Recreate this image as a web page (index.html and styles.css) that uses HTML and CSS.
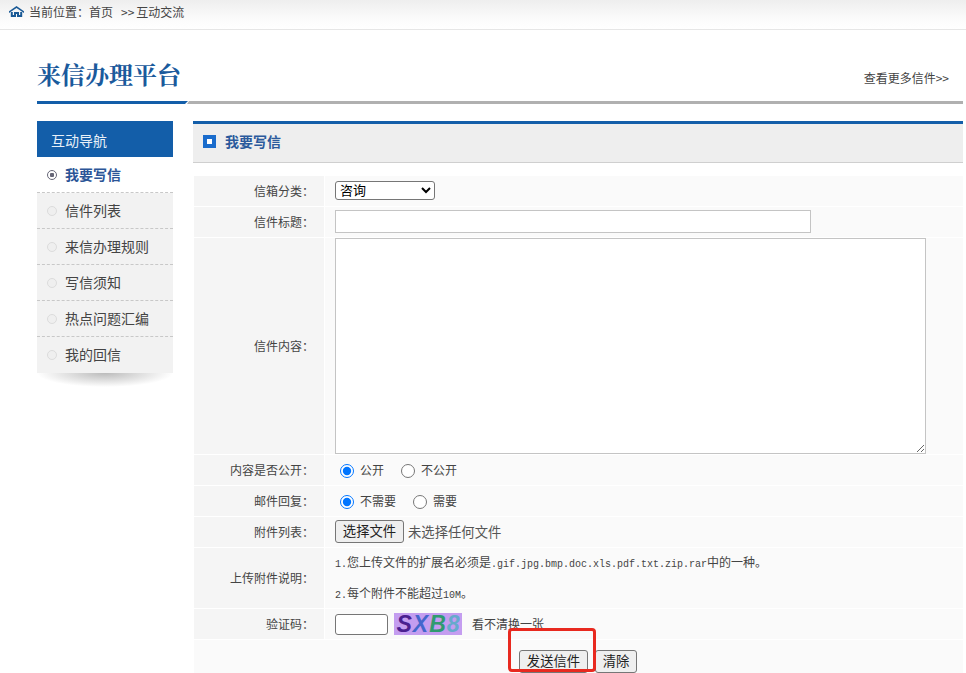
FILE: index.html
```html
<!DOCTYPE html>
<html lang="zh-CN">
<head>
<meta charset="utf-8">
<title>来信办理平台</title>
<link rel="stylesheet" href="styles.css">
</head>
<body>
<div class="topbar">
  <svg class="home" width="15" height="11" viewBox="0 0 15 11"><path d="M0 5.200 7.500 0 15 5.200v1.800L7.500 2 0 7z" fill="#1a5a96"/><path d="M2.800 6V10H6V7h3v3h3.200V6" fill="none" stroke="#1a5a96" stroke-width="2"/></svg>
  <span>当前位置&#65306;首页</span><span class="crumb-sep">&gt;&gt;</span><span>互动交流</span>
</div>
<header class="page-head">
  <div class="head-row">
    <h1>来信办理平台</h1>
    <a class="more">查看更多信件&gt;&gt;</a>
  </div>
  <div class="rule"><i class="rule-blue"></i><i class="rule-gray"></i></div>
</header>
<div class="layout">
  <aside class="side">
    <div class="side-title">互动导航</div>
    <ul class="menu">
      <li class="active"><i class="dot"></i>我要写信</li>
      <li><i class="dot"></i>信件列表</li>
      <li><i class="dot"></i>来信办理规则</li>
      <li><i class="dot"></i>写信须知</li>
      <li><i class="dot"></i>热点问题汇编</li>
      <li><i class="dot"></i>我的回信</li>
    </ul>
    <div class="side-shadow"></div>
  </aside>
  <main class="panel">
    <div class="panel-head"><i class="square"></i>我要写信</div>
    <form class="form">
      <div class="lab">信箱分类&#65306;</div>
      <div class="val"><select class="sel"><option>咨询</option></select></div>
      <div class="lab">信件标题&#65306;</div>
      <div class="val"><input class="title-in" type="text"></div>
      <div class="lab tall">信件内容&#65306;</div>
      <div class="val tall"><textarea class="content"></textarea></div>
      <div class="lab">内容是否公开&#65306;</div>
      <div class="val radios">
        <label><input type="radio" name="pub" checked>公开</label>
        <label><input type="radio" name="pub">不公开</label>
      </div>
      <div class="lab">邮件回复&#65306;</div>
      <div class="val radios">
        <label><input type="radio" name="rep" checked>不需要</label>
        <label><input type="radio" name="rep">需要</label>
      </div>
      <div class="lab">附件列表&#65306;</div>
      <div class="val"><button type="button" class="btn file">选择文件</button><span class="nofile">未选择任何文件</span></div>
      <div class="lab notes-row">上传附件说明&#65306;</div>
      <div class="val notes-row notes">
        <p><span class="mono">1.</span>您上传文件的扩展名必须是<span class="mono">.gif.jpg.bmp.doc.xls.pdf.txt.zip.rar</span>中的一种。</p>
        <p><span class="mono">2.</span>每个附件不能超过<span class="mono">10M</span>。</p>
      </div>
      <div class="lab">验证码&#65306;</div>
      <div class="val">
        <input class="code" type="text">
        <span class="captcha"><b class="c1">S</b><b class="c2">X</b><b class="c3">B</b><b class="c4">8</b></span>
        <span class="refresh">看不清换一张</span>
      </div>
      <div class="actions">
        <button type="button" class="btn send">发送信件</button><button type="button" class="btn clear">清除</button>
        <div class="highlight"></div>
      </div>
    </form>
  </main>
</div>
</body>
</html>
```
FILE: styles.css
```css
* { box-sizing: border-box; }
html, body { margin: 0; height: 673px; overflow: hidden; background: #fff; }
body { font: 12px/1.5 "Noto Sans CJK SC", "Liberation Sans", sans-serif; color: #444; }
.topbar { height: 30px; display: flex; align-items: center; padding: 0 0 6px 9px; background: linear-gradient(#eeeeee, #fafafa 60%, #fff); border-bottom: 1px solid #e6e6e6; color: #444; }
.home { margin-right: 5px; flex: none; }
.crumb-sep { margin: 0 2px 0 8px; }
.page-head { padding: 0 3px 0 37px; }
.head-row { height: 71px; display: flex; justify-content: space-between; align-items: flex-start; padding-right: 14px; }
h1 { margin: 26px 0 0; font-family: "Noto Serif CJK SC", "Noto Sans CJK SC", serif; font-size: 24px; line-height: 36px; font-weight: 700; color: #1a5a9c; }
.more { margin-top: 39px; font-size: 12px; line-height: 18px; color: #444; }
.rule { display: flex; height: 3px; }
.rule-blue { width: 151px; background: #135ea9; clip-path: polygon(0 0, 100% 0, 98% 100%, 0 100%); }
.rule-gray { flex: 1; background: #b0b0b0; margin-left: -1px; clip-path: polygon(2px 0, 100% 0, 100% 100%, 0 100%); }
.layout { display: flex; padding: 17px 3px 0 37px; gap: 20px; align-items: flex-start; }
.side { width: 136px; flex: none; }
.side-title { height: 36px; line-height: 39px; padding-left: 14px; font-size: 14px; color: #e8f0f8; background: #135ea9; }
.menu { list-style: none; margin: 0; padding: 0; }
.menu li { height: 36px; display: flex; align-items: center; padding-left: 10px; font-size: 14px; background: #f2f2f2; border-bottom: 1px dashed #c8c8c8; color: #444; }
.menu li:last-child { border-bottom: 0; padding-bottom: 1px; }
.menu li.active { background: #fff; color: #2b5597; font-weight: 700; }
.dot { width: 10px; height: 10px; margin-right: 8px; border-radius: 50%; border: 1px solid #dcdcdc; background: #efefef; flex: none; }
.active .dot { border-color: #667; background: radial-gradient(circle, #667 0 2px, #fff 2.500px); }
.side-shadow { height: 14px; background: radial-gradient(ellipse 50% 100% at 50% 0, #bbb, rgba(255,255,255,0) 100%); }
.panel { flex: 1; min-width: 0; }
.panel-head { height: 42px; display: flex; align-items: center; padding: 0 0 3px 10px; font-size: 14px; font-weight: 700; color: #2b5a9c; background: #eeeeee; border-top: 3px solid #135ea9; border-bottom: 1px solid #cfcfcf; }
.square { width: 13px; height: 13px; margin-right: 9px; border: 4px solid #1a6ccc; background: #fff; }
.form { display: grid; grid-template-columns: 130px 1fr; gap: 1px; margin: 13px 0 0 1px; }
.lab { height: 30px; display: flex; align-items: center; justify-content: flex-end; padding-right: 10px; background: #f5f5f5; color: #444; }
.val { height: 30px; display: flex; align-items: center; padding-left: 10px; background: #fafafa; }
.tall { height: 216px; }
.notes-row { height: 60px; }
.sel { width: 100px; height: 19px; margin-bottom: 1px; padding: 0; font: 13px "Liberation Sans", "Noto Sans CJK SC", sans-serif; background: #fff; border: 1px solid #767676; border-radius: 3px; color: #000; }
.title-in { width: 476px; height: 23px; margin-bottom: 1px; border: 1px solid #c4c4c4; background: #fff; }
.content { display: block; width: 591px; height: 216px; border: 1px solid #c4c4c4; background: #fff; align-self: flex-start; }
.radios label { display: flex; align-items: center; margin-right: 12px; }
.radios input { width: 14px; height: 14px; margin: 2px 6px 0 5px; }
.btn { height: 23px; padding: 0 6px; font: 13.33px/21px "Liberation Sans", "Noto Sans CJK SC", sans-serif; color: #222; background: #efefef; border: 1px solid #767676; border-radius: 3px; }
.file { width: 69px; margin-bottom: 1px; }
.nofile { margin-left: 4px; font-size: 13.33px; color: #555; }
.notes { flex-direction: column; align-items: flex-start; justify-content: center; gap: 10px; padding-top: 2px; }
.notes p { margin: 0; line-height: 18px; font-size: 12px; }
.mono { font: 10px/18px "Liberation Mono", monospace; }
.code { width: 53px; height: 21px; border: 1px solid #767676; border-radius: 3px; background: #fff; }
.captcha { display: flex; width: 68px; height: 22px; margin-left: 6px; align-items: center; justify-content: center; gap: 1px; background: #c49df0; font: italic 700 23px/22px "Liberation Sans", sans-serif; }
.c1 { color: #4a2090; } .c2 { color: #4466cc; } .c3 { color: #2f9a70; } .c4 { color: #66aacc; }
.refresh { margin-left: 10px; color: #444; }
.actions { grid-column: 1 / -1; position: relative; height: 33px; display: flex; align-items: flex-end; gap: 7px; padding: 0 0 0 325px; background: #fafafa; }
.send { width: 69px; }
.clear { width: 42px; }
.highlight { position: absolute; left: 314px; top: -12px; width: 88px; height: 44px; border: 3px solid #e8291f; border-radius: 4px; pointer-events: none; }
```
